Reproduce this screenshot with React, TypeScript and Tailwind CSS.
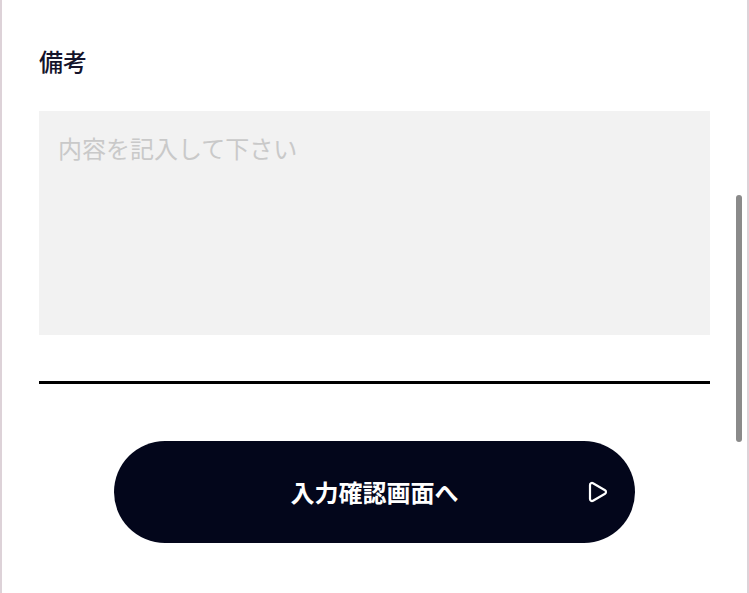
import { Play } from "lucide-react"

export default function App() {
    return (
        <div className="relative h-[593px] w-[749px] overflow-hidden bg-white border-x-2 border-[#ddd2d8] font-['Noto_Sans_CJK_JP','Noto_Sans',sans-serif]">
            <div className="pl-[37px] pr-[37px] pt-[43px]">
                <h2 className="text-[24px] font-medium leading-[36px] text-[#14142b]">備考</h2>

                <textarea
                    className="mt-[32px] block h-[224px] w-full resize-none bg-[#f2f2f2] px-[19px] py-[19px] text-[24px] leading-[36px] text-[#333] placeholder:text-[#c9c9c9] outline-none"
                    placeholder="内容を記入して下さい"
                />

                <div className="mt-[46px] h-[3px] w-full bg-black" />

                <div className="flex justify-center pt-[57px]">
                    <button className="relative flex h-[102px] w-[521px] items-center justify-center rounded-full bg-[#03061b] text-[24px] font-bold text-white">
                        入力確認画面へ
                        <Play className="absolute right-[26px] h-[24px] w-[24px]" strokeWidth={2.2} />
                    </button>
                </div>
            </div>

            {/* scrollbar thumb */}
            <div className="absolute right-[5px] top-[195px] h-[247px] w-[6px] rounded-full bg-[#8a8a8a]" />
        </div>
    )
}
